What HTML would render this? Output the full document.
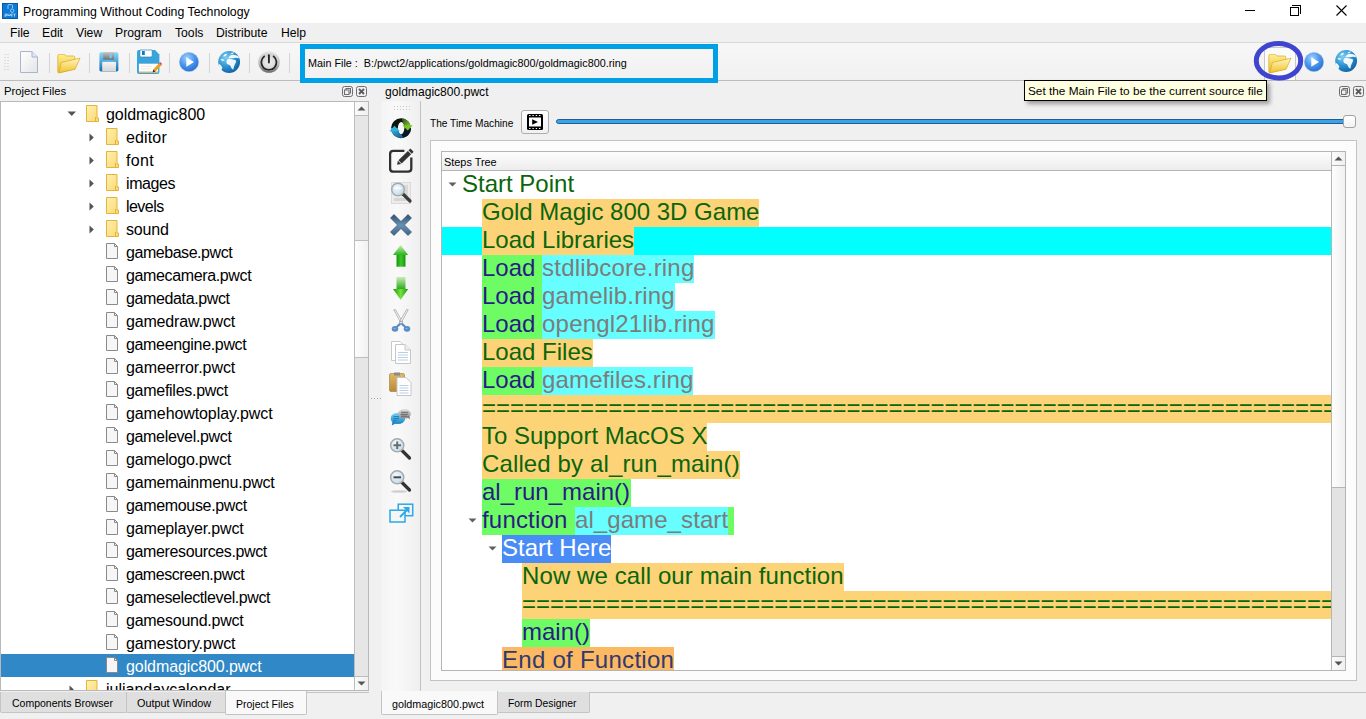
<!DOCTYPE html>
<html><head><meta charset="utf-8">
<style>
*{box-sizing:border-box;margin:0;padding:0}
html,body{width:1366px;height:719px;overflow:hidden;background:#f0f0f0;font-family:"Liberation Sans",sans-serif;color:#000}
.a{position:absolute}
.t{position:absolute;white-space:pre;line-height:20px}
#title{left:0;top:0;width:1366px;height:23px;background:#fff}
#menubar{left:0;top:23px;width:1366px;height:19px;background:#f0f0f0}
#tbline1{left:0;top:42px;width:1366px;height:1px;background:#d9d9d9}
#toolbar{left:0;top:43px;width:1366px;height:37px;background:linear-gradient(#f7f7f7,#f1f1f1)}
#tbline2{left:0;top:80px;width:1366px;height:1px;background:#bcbcbc}
.sep{position:absolute;top:53px;width:1px;height:20px;background:#d4d4d4}
/* project tree */
#ptree{left:0;top:101px;width:369px;height:590px;background:#fff;border:1px solid #b9b9b9;overflow:hidden}
.prow{position:absolute;left:1px;width:353px;height:23px}
.pt{position:absolute;font-size:16px;line-height:23px;margin-top:1px;white-space:pre;color:#000}
.sb{position:absolute;background:#e6e6e6;border-left:1px solid #bdbdbd}
/* steps */
.row{position:absolute;height:28px;white-space:pre;font-size:24px;line-height:28px}
.bx{display:inline-block;height:28px;vertical-align:top}
.bx span{position:relative;top:-1px}
.cm{background:#fdd378;color:#0b650b}
.kw{background:#6efc65;color:#2a1a84}
.pr{background:#66fefe;color:#7c7c7c}
.sp{color:#0b650b}
.sh{background:#4a8cf6;color:#fff}
.ef{background:#fdb862;color:#2f3a70}
</style></head><body>
<!-- Title bar -->
<div id="title" class="a"></div>
<svg class="a" style="left:2px;top:3px" width="16" height="16" viewBox="0 0 16 16">
<rect x="0.5" y="0.5" width="15" height="15" fill="#0b7ad6" stroke="#0a58a8" stroke-width="1"/>
<g fill="none" stroke="#cfe6fa" stroke-width="0.8" opacity="0.9">
<path d="M6 6 V2.5 Q6 1.6 7 1.6 H9.5 Q10.5 1.6 10.5 2.5 V5"/>
<circle cx="10.2" cy="7.6" r="1.7"/>
<path d="M7 9.8 V10.4"/>
<path d="M3.2 14 V11 H5.2 V12.6 H3.2 M5.8 11 L6.5 13 L7.2 11.8 L7.9 13 L8.6 11 M10.8 11 H9.3 V13 H10.8 M11.4 11 H13.5 M12.5 11 V13.6"/>
</g>
</svg>
<div class="t" style="left:23px;top:2px;font-size:12.3px;color:#000">Programming Without Coding Technology</div>
<div class="a" style="left:1245px;top:10px;width:10px;height:1px;background:#000"></div>
<div class="a" style="left:1290px;top:7px;width:9px;height:9px;border:1px solid #000;background:#fff"></div>
<div class="a" style="left:1292px;top:5px;width:9px;height:9px;border-top:1px solid #000;border-right:1px solid #000"></div>
<svg class="a" style="left:1336px;top:5px" width="11" height="11" viewBox="0 0 11 11"><path d="M0.5 0.5L10.5 10.5M10.5 0.5L0.5 10.5" stroke="#000" stroke-width="1.1"/></svg>

<!-- Menu -->
<div id="menubar" class="a"></div>
<div class="t" style="left:10px;top:23px;font-size:12.2px">File</div>
<div class="t" style="left:42px;top:23px;font-size:12.2px">Edit</div>
<div class="t" style="left:76px;top:23px;font-size:12.2px">View</div>
<div class="t" style="left:115px;top:23px;font-size:12.2px">Program</div>
<div class="t" style="left:175px;top:23px;font-size:12.2px">Tools</div>
<div class="t" style="left:216px;top:23px;font-size:12.2px">Distribute</div>
<div class="t" style="left:281px;top:23px;font-size:12.2px">Help</div>
<div id="tbline1" class="a"></div>

<!-- Toolbar -->
<div id="toolbar" class="a"></div>
<div id="tbline2" class="a"></div>

<svg width="0" height="0" style="position:absolute">
<defs>
<linearGradient id="gFold" x1="0" y1="0" x2="0" y2="1"><stop offset="0" stop-color="#fff6c0"/><stop offset="1" stop-color="#f1c22a"/></linearGradient>
<linearGradient id="gFoldB" x1="0" y1="0" x2="0" y2="1"><stop offset="0" stop-color="#fff090"/><stop offset="1" stop-color="#e8bc30"/></linearGradient>
<radialGradient id="gPlay" cx="0.4" cy="0.3" r="0.8"><stop offset="0" stop-color="#9fd0ff"/><stop offset="0.5" stop-color="#4a95ec"/><stop offset="1" stop-color="#1f64cc"/></radialGradient>
<radialGradient id="gGlobe" cx="0.35" cy="0.3" r="0.8"><stop offset="0" stop-color="#7fd0f4"/><stop offset="0.55" stop-color="#2a8fd0"/><stop offset="1" stop-color="#0b5a9a"/></radialGradient>
<radialGradient id="gPow" cx="0.5" cy="0.5" r="0.6"><stop offset="0" stop-color="#f2f2f2"/><stop offset="0.8" stop-color="#cfcfcf"/><stop offset="1" stop-color="#bdbdbd"/></radialGradient>
<linearGradient id="gPowRim" x1="0" y1="0" x2="0" y2="1"><stop offset="0" stop-color="#e8e8e8"/><stop offset="0.6" stop-color="#bcbcbc"/><stop offset="1" stop-color="#6a6a6a"/></linearGradient>
<linearGradient id="gPage" x1="0" y1="0" x2="1" y2="1"><stop offset="0" stop-color="#ffffff"/><stop offset="1" stop-color="#e4e4e8"/></linearGradient>
<linearGradient id="gShut" x1="0" y1="0" x2="0" y2="1"><stop offset="0" stop-color="#6e6e6e"/><stop offset="1" stop-color="#d8d8d8"/></linearGradient>
<linearGradient id="gArrU" x1="0" y1="0" x2="1" y2="0"><stop offset="0" stop-color="#1f9a10"/><stop offset="0.5" stop-color="#7ee860"/><stop offset="1" stop-color="#1f9a10"/></linearGradient>
<linearGradient id="gX" x1="0" y1="0" x2="0" y2="1"><stop offset="0" stop-color="#2c4e6e"/><stop offset="0.5" stop-color="#6a8fb2"/><stop offset="1" stop-color="#3d6388"/></linearGradient>
<symbol id="sFolderOpen" viewBox="0 0 24 20">
<path d="M0.8 2 Q0.8 0.3 2.6 0.3 H6.5 Q7.8 0.3 8.4 1.3 L8.9 2 H16.4 Q17.8 2 17.8 3.4 V15 L1.9 18.8 Q0.8 19 0.8 17.6 Z" fill="url(#gFoldB)" stroke="#d9a82a" stroke-width="0.7"/>
<path d="M4.4 8.4 L23 4.2 L18.1 15.2 L1.8 18.9 Z" fill="url(#gFold)" stroke="#d9a82a" stroke-width="0.7"/>
</symbol>
<symbol id="sPlay" viewBox="0 0 20 20">
<circle cx="10" cy="10" r="9.6" fill="url(#gPlay)" stroke="#8aaee0" stroke-width="0.5"/>
<path d="M7.3 5.2 L15 10 L7.3 14.8 Z" fill="#fff"/>
</symbol>
<symbol id="sGlobe" viewBox="0 0 22 22">
<circle cx="11.1" cy="11" r="10.9" fill="url(#gGlobe)"/>
<g fill="#fff" opacity="0.93">
<path d="M8.6 9.6 Q9.2 7.6 11.6 7.8 L13.6 8.2 Q16.6 8.4 18 9.4 Q18.2 11 17.2 12.8 Q16 14.6 15.2 18.8 Q13.4 18 12.8 15.8 Q12.2 14 10.9 13.8 Q8.6 13.4 8.4 11.6 Z"/>
<path d="M10.2 7.2 Q11.4 4.2 14.4 3.8 Q17.6 3.4 20.6 5.4 L20.8 7.4 Q18.6 6.6 16.2 7 Q13 7.4 10.2 7.2 Z"/>
<path d="M12.2 3.2 Q13.8 1 16.2 1.6 Q15 3.8 12.2 3.2 Z"/>
<path d="M5.4 5.6 Q5.8 2.9 8.8 2.8 Q8.6 5.4 5.4 5.6 Z"/>
<path d="M2.4 8.6 Q4.2 7.2 6.4 9.2 Q4.6 10.6 2.4 8.6 Z"/>
<path d="M0.4 12.4 Q2.8 13.2 4.4 16.4 Q4 18.4 3 19 Q0.6 16.2 0.4 12.4 Z"/>
</g>
</symbol>
<symbol id="sPower" viewBox="0 0 22 22">
<circle cx="11" cy="11" r="10.8" fill="url(#gPowRim)"/>
<circle cx="11" cy="11" r="9" fill="url(#gPow)"/>
<path d="M6.2 5.4 A7.6 7.6 0 1 0 15.6 5.4" fill="none" stroke="#262626" stroke-width="1.8" stroke-linecap="round"/>
<path d="M10.9 4.3 V11.6" stroke="#262626" stroke-width="1.9" stroke-linecap="round"/>
</symbol>
</defs></svg>
<!-- grip -->
<svg class="a" style="left:4px;top:53px" width="6" height="18" viewBox="0 0 6 18">
<g fill="#c4c4c4"><rect x="0.5" y="1" width="1" height="1"/><rect x="3.5" y="1" width="1" height="1"/><rect x="0.5" y="4" width="1" height="1"/><rect x="3.5" y="4" width="1" height="1"/><rect x="0.5" y="7" width="1" height="1"/><rect x="3.5" y="7" width="1" height="1"/><rect x="0.5" y="10" width="1" height="1"/><rect x="3.5" y="10" width="1" height="1"/><rect x="0.5" y="13" width="1" height="1"/><rect x="3.5" y="13" width="1" height="1"/><rect x="0.5" y="16" width="1" height="1"/><rect x="3.5" y="16" width="1" height="1"/></g></svg>
<!-- new file -->
<svg class="a" style="left:19px;top:50px" width="20" height="24" viewBox="0 0 20 24">
<path d="M1.5 1.5 H13 L18.5 7 V22.5 H1.5 Z" fill="url(#gPage)" stroke="#aab4cc" stroke-width="1"/>
<path d="M13 1.5 V7 H18.5" fill="#dfe6f5" stroke="#aab4cc" stroke-width="1"/>
</svg>
<div class="sep" style="left:49px"></div>
<svg class="a" style="left:57px;top:54px" width="24" height="20"><use href="#sFolderOpen"/></svg>
<div class="sep" style="left:89px"></div>
<!-- save -->
<svg class="a" style="left:98px;top:51px" width="21" height="21" viewBox="0 0 21 21">
<defs><linearGradient id="gSb" x1="0" y1="0" x2="0" y2="1"><stop offset="0" stop-color="#8adaf8"/><stop offset="1" stop-color="#0f6cb4"/></linearGradient>
<linearGradient id="gSs" x1="0" y1="0" x2="0" y2="1"><stop offset="0" stop-color="#c6c6c6"/><stop offset="1" stop-color="#6e6e6e"/></linearGradient>
<linearGradient id="gSl" x1="0" y1="0" x2="0" y2="1"><stop offset="0" stop-color="#f4f4f4"/><stop offset="1" stop-color="#d4d4d4"/></linearGradient></defs>
<rect x="1.4" y="1.2" width="19" height="19.2" rx="1.6" fill="url(#gSb)"/>
<rect x="5.2" y="1.2" width="10.8" height="7.6" fill="url(#gSs)"/>
<rect x="11.6" y="3" width="2" height="4.2" fill="#7ad0f4"/>
<rect x="5.2" y="8.8" width="10.8" height="2.1" fill="#52b4e8"/>
<rect x="4.2" y="10.9" width="13.8" height="9.5" fill="url(#gSl)"/>
</svg>
<div class="sep" style="left:129px"></div>
<!-- save as -->
<svg class="a" style="left:136px;top:49px" width="26" height="26" viewBox="0 0 26 26">
<path d="M1 3 Q1 1 3 1 H19 L23.4 5.5 V23 Q23.4 25 21.4 25 H3 Q1 25 1 23 Z" fill="#3aa3da"/>
<path d="M3.9 1 H16.2 V6.5 Q16.2 8 14.7 8 H5.4 Q3.9 8 3.9 6.5 Z" fill="#fff" stroke="#2588c4" stroke-width="0.7"/>
<rect x="6" y="2" width="2.8" height="4" fill="#1a78b8"/>
<rect x="2.9" y="14.7" width="19.2" height="9" fill="#fff"/>
<path d="M4.5 17.3 H16 M4.5 19.8 H15" stroke="#e2e2e2" stroke-width="0.8"/>
<rect x="2.9" y="22.6" width="19.2" height="1.1" fill="#d9a040"/>
<path d="M17.2 20.5 L23 14.3 L25.3 16.4 L19.5 22.6 Z" fill="#f0a020"/>
<path d="M23 14.3 L24.2 13 L26 14.7 L25.3 16.4 Z" fill="#e64848"/>
<path d="M17.2 20.5 L19.5 22.6 L16.8 23.2 Z" fill="#222"/>
</svg>
<div class="sep" style="left:169px"></div>
<svg class="a" style="left:179px;top:52px" width="20" height="20"><use href="#sPlay"/></svg>
<div class="sep" style="left:209px"></div>
<svg class="a" style="left:218px;top:51px" width="22" height="22"><use href="#sGlobe"/></svg>
<div class="sep" style="left:249px"></div>
<svg class="a" style="left:258px;top:51px" width="22" height="22"><use href="#sPower"/></svg>
<div class="sep" style="left:289px"></div>
<!-- main file frame -->
<div class="a" style="left:300px;top:44px;width:418px;height:39px;border:5px solid #00a0e6;background:transparent"></div>
<div class="t" style="left:308px;top:53px;font-size:10.8px;color:#000">Main File :  B:/pwct2/applications/goldmagic800/goldmagic800.ring</div>
<!-- right toolbar -->
<div class="a" style="left:1264px;top:47px;width:32px;height:33px;border:1px solid #c8c8c8;border-bottom:none;background:#fbfbfb"></div>
<svg class="a" style="left:1268px;top:54px" width="24" height="20"><use href="#sFolderOpen"/></svg>
<svg class="a" style="left:1250px;top:38px" width="58" height="46" viewBox="0 0 58 46"><ellipse cx="28.5" cy="22.7" rx="22.2" ry="17.3" fill="none" stroke="#3f45cf" stroke-width="5"/></svg>
<svg class="a" style="left:1304px;top:52px" width="20" height="20"><use href="#sPlay"/></svg>
<svg class="a" style="left:1335px;top:50px" width="22" height="22"><use href="#sGlobe"/></svg>

<svg width="0" height="0" style="position:absolute"><defs>
<linearGradient id="gFc" x1="0" y1="0" x2="1" y2="1"><stop offset="0" stop-color="#fff0b0"/><stop offset="1" stop-color="#fbd870"/></linearGradient>
<symbol id="sFolder" viewBox="0 0 14 17">
<path d="M1.5 0.5 H12 V13 H13.5 V16.5 H1.5 Z" fill="url(#gFc)" stroke="#e2b43a" stroke-width="1"/>
<path d="M10.5 12 V16.5" stroke="#e2b43a" stroke-width="1"/>
</symbol>
<symbol id="sFile" viewBox="0 0 14 17">
<path d="M1.5 1.5 H9.5 L12.5 4.5 V16.5 H1.5 Z" fill="#f6f6f6" stroke="#8a8a8a" stroke-width="1"/>
<path d="M9.5 1.5 V4.5 H12.5" fill="none" stroke="#8a8a8a" stroke-width="1"/>
</symbol>
</defs></svg>
<div class="t" style="left:4px;top:81px;font-size:11.3px;color:#000">Project Files</div>
<svg class="a" style="left:342px;top:86px" width="11" height="11" viewBox="0 0 11 11"><rect x="0.5" y="0.5" width="10" height="10" rx="2" fill="none" stroke="#6e6e6e"/><rect x="4" y="2.5" width="4.5" height="4.5" fill="none" stroke="#6e6e6e"/><rect x="2.5" y="4" width="4.5" height="4.5" fill="#f0f0f0" stroke="#6e6e6e"/></svg>
<svg class="a" style="left:356px;top:86px" width="11" height="11" viewBox="0 0 11 11"><rect x="0.5" y="0.5" width="10" height="10" rx="2" fill="none" stroke="#6e6e6e"/><path d="M3 3 L8 8 M8 3 L3 8" stroke="#5a5a5a" stroke-width="1.8"/></svg>
<div id="ptree" class="a">

<div class="a" style="left:0;top:552px;width:353px;height:23px;background:#3088c6"></div>
<svg class="a" style="left:66px;top:9px" width="10" height="6"><path d="M0.5 0.5 H9 L4.75 5 Z" fill="#555"/></svg>
<svg class="a" style="left:84px;top:3px" width="14" height="17"><use href="#sFolder"/></svg>
<div class="pt" style="left:105px;top:0px;letter-spacing:-0.045px;">goldmagic800</div>
<svg class="a" style="left:88px;top:31px" width="6" height="9"><path d="M0.5 0.5 L4.8 4.5 L0.5 8.5 Z" fill="#555"/></svg>
<svg class="a" style="left:104px;top:26px" width="14" height="17"><use href="#sFolder"/></svg>
<div class="pt" style="left:125px;top:23px;letter-spacing:0.140px;">editor</div>
<svg class="a" style="left:88px;top:54px" width="6" height="9"><path d="M0.5 0.5 L4.8 4.5 L0.5 8.5 Z" fill="#555"/></svg>
<svg class="a" style="left:104px;top:49px" width="14" height="17"><use href="#sFolder"/></svg>
<div class="pt" style="left:125px;top:46px;letter-spacing:0.300px;">font</div>
<svg class="a" style="left:88px;top:77px" width="6" height="9"><path d="M0.5 0.5 L4.8 4.5 L0.5 8.5 Z" fill="#555"/></svg>
<svg class="a" style="left:104px;top:72px" width="14" height="17"><use href="#sFolder"/></svg>
<div class="pt" style="left:125px;top:69px;letter-spacing:-0.400px;">images</div>
<svg class="a" style="left:88px;top:100px" width="6" height="9"><path d="M0.5 0.5 L4.8 4.5 L0.5 8.5 Z" fill="#555"/></svg>
<svg class="a" style="left:104px;top:95px" width="14" height="17"><use href="#sFolder"/></svg>
<div class="pt" style="left:125px;top:92px;letter-spacing:-0.540px;">levels</div>
<svg class="a" style="left:88px;top:123px" width="6" height="9"><path d="M0.5 0.5 L4.8 4.5 L0.5 8.5 Z" fill="#555"/></svg>
<svg class="a" style="left:104px;top:118px" width="14" height="17"><use href="#sFolder"/></svg>
<div class="pt" style="left:125px;top:115px;letter-spacing:-0.175px;">sound</div>
<svg class="a" style="left:104px;top:140px" width="14" height="17"><use href="#sFile"/></svg>
<div class="pt" style="left:125px;top:138px;letter-spacing:-0.450px;">gamebase.pwct</div>
<svg class="a" style="left:104px;top:163px" width="14" height="17"><use href="#sFile"/></svg>
<div class="pt" style="left:125px;top:161px;letter-spacing:-0.364px;">gamecamera.pwct</div>
<svg class="a" style="left:104px;top:186px" width="14" height="17"><use href="#sFile"/></svg>
<div class="pt" style="left:125px;top:184px;letter-spacing:-0.375px;">gamedata.pwct</div>
<svg class="a" style="left:104px;top:209px" width="14" height="17"><use href="#sFile"/></svg>
<div class="pt" style="left:125px;top:207px;letter-spacing:-0.167px;">gamedraw.pwct</div>
<svg class="a" style="left:104px;top:232px" width="14" height="17"><use href="#sFile"/></svg>
<div class="pt" style="left:125px;top:230px;letter-spacing:-0.336px;">gameengine.pwct</div>
<svg class="a" style="left:104px;top:255px" width="14" height="17"><use href="#sFile"/></svg>
<div class="pt" style="left:125px;top:253px;letter-spacing:-0.077px;">gameerror.pwct</div>
<svg class="a" style="left:104px;top:278px" width="14" height="17"><use href="#sFile"/></svg>
<div class="pt" style="left:125px;top:276px;letter-spacing:-0.277px;">gamefiles.pwct</div>
<svg class="a" style="left:104px;top:301px" width="14" height="17"><use href="#sFile"/></svg>
<div class="pt" style="left:125px;top:299px;letter-spacing:-0.094px;">gamehowtoplay.pwct</div>
<svg class="a" style="left:104px;top:324px" width="14" height="17"><use href="#sFile"/></svg>
<div class="pt" style="left:125px;top:322px;letter-spacing:-0.338px;">gamelevel.pwct</div>
<svg class="a" style="left:104px;top:347px" width="14" height="17"><use href="#sFile"/></svg>
<div class="pt" style="left:125px;top:345px;letter-spacing:-0.208px;">gamelogo.pwct</div>
<svg class="a" style="left:104px;top:370px" width="14" height="17"><use href="#sFile"/></svg>
<div class="pt" style="left:125px;top:368px;letter-spacing:-0.206px;">gamemainmenu.pwct</div>
<svg class="a" style="left:104px;top:393px" width="14" height="17"><use href="#sFile"/></svg>
<div class="pt" style="left:125px;top:391px;letter-spacing:-0.323px;">gamemouse.pwct</div>
<svg class="a" style="left:104px;top:416px" width="14" height="17"><use href="#sFile"/></svg>
<div class="pt" style="left:125px;top:414px;letter-spacing:-0.164px;">gameplayer.pwct</div>
<svg class="a" style="left:104px;top:439px" width="14" height="17"><use href="#sFile"/></svg>
<div class="pt" style="left:125px;top:437px;letter-spacing:-0.371px;">gameresources.pwct</div>
<svg class="a" style="left:104px;top:462px" width="14" height="17"><use href="#sFile"/></svg>
<div class="pt" style="left:125px;top:460px;letter-spacing:-0.471px;">gamescreen.pwct</div>
<svg class="a" style="left:104px;top:485px" width="14" height="17"><use href="#sFile"/></svg>
<div class="pt" style="left:125px;top:483px;letter-spacing:-0.395px;">gameselectlevel.pwct</div>
<svg class="a" style="left:104px;top:508px" width="14" height="17"><use href="#sFile"/></svg>
<div class="pt" style="left:125px;top:506px;letter-spacing:-0.254px;">gamesound.pwct</div>
<svg class="a" style="left:104px;top:531px" width="14" height="17"><use href="#sFile"/></svg>
<div class="pt" style="left:125px;top:529px;letter-spacing:-0.100px;">gamestory.pwct</div>
<svg class="a" style="left:104px;top:554px" width="14" height="17"><use href="#sFile"/></svg>
<div class="pt" style="left:125px;top:552px;color:#fff;letter-spacing:-0.081px;">goldmagic800.pwct</div>
<svg class="a" style="left:68px;top:583px" width="6" height="9"><path d="M0.5 0.5 L4.8 4.5 L0.5 8.5 Z" fill="#555"/></svg>
<svg class="a" style="left:84px;top:578px" width="14" height="17"><use href="#sFolder"/></svg>
<div class="pt" style="left:105px;top:575px">juliandaycalendar</div>

<div class="sb" style="left:353px;top:0;width:14px;height:588px"></div>
<div class="a" style="left:354px;top:0;width:13px;height:14px;background:linear-gradient(90deg,#fbfbfb,#f0f0f0);border-bottom:1px solid #bdbdbd"></div>
<svg class="a" style="left:356px;top:4px" width="9" height="5"><path d="M0.5 4.5 L4.5 0.5 L8.5 4.5 Z" fill="#555"/></svg>
<div class="a" style="left:354px;top:138px;width:13px;height:118px;background:linear-gradient(90deg,#fdfdfd,#f1f1f1);border-top:1px solid #bdbdbd;border-bottom:1px solid #bdbdbd"></div>
<div class="a" style="left:354px;top:574px;width:13px;height:14px;background:linear-gradient(90deg,#fbfbfb,#f0f0f0);border-top:1px solid #bdbdbd"></div>
<svg class="a" style="left:356px;top:579px" width="9" height="5"><path d="M0.5 0.5 L4.5 4.5 L8.5 0.5 Z" fill="#555"/></svg>
</div>
<!-- left bottom tabs -->
<div class="a" style="left:0;top:692px;width:369px;height:1px;background:#c4c4c4"></div>
<div class="a" style="left:0;top:692px;width:127px;height:21px;background:#dfdfdf;border:1px solid #c4c4c4;border-top:none;border-radius:0 0 2px 2px"></div>
<div class="t" style="left:12px;top:693px;font-size:10.5px">Components Browser</div>
<div class="a" style="left:126px;top:692px;width:100px;height:21px;background:#dfdfdf;border:1px solid #c4c4c4;border-top:none;border-radius:0 0 2px 2px"></div>
<div class="t" style="left:137px;top:693px;font-size:10.85px">Output Window</div>
<div class="a" style="left:225px;top:691px;width:82px;height:24px;background:#f9f9f9;border:1px solid #c4c4c4;border-top:none;border-radius:0 0 2px 2px"></div>
<div class="t" style="left:236px;top:694px;font-size:10.5px">Project Files</div>


<!-- editor dock -->
<div class="t" style="left:385px;top:82px;font-size:12.1px">goldmagic800.pwct</div>
<svg class="a" style="left:1339px;top:86px" width="11" height="11" viewBox="0 0 11 11"><rect x="0.5" y="0.5" width="10" height="10" rx="2" fill="none" stroke="#6e6e6e"/><rect x="4" y="2.5" width="4.5" height="4.5" fill="none" stroke="#6e6e6e"/><rect x="2.5" y="4" width="4.5" height="4.5" fill="#f0f0f0" stroke="#6e6e6e"/></svg>
<svg class="a" style="left:1353px;top:86px" width="11" height="11" viewBox="0 0 11 11"><rect x="0.5" y="0.5" width="10" height="10" rx="2" fill="none" stroke="#6e6e6e"/><path d="M3 3 L8 8 M8 3 L3 8" stroke="#5a5a5a" stroke-width="1.8"/></svg>
<div class="a" style="left:381px;top:101px;width:39px;height:591px;background:linear-gradient(90deg,#f4f4f4,#f9f9f9 40%,#efefef)"></div>
<div class="a" style="left:420px;top:101px;width:1px;height:591px;background:#c2c2c2"></div>
<svg class="a" style="left:393px;top:105px" width="18" height="6"><g fill="#c8c8c8"><rect x="1" y="1" width="1" height="1"/><rect x="4" y="1" width="1" height="1"/><rect x="7" y="1" width="1" height="1"/><rect x="10" y="1" width="1" height="1"/><rect x="13" y="1" width="1" height="1"/><rect x="16" y="1" width="1" height="1"/><rect x="1" y="4" width="1" height="1"/><rect x="4" y="4" width="1" height="1"/><rect x="7" y="4" width="1" height="1"/><rect x="10" y="4" width="1" height="1"/><rect x="13" y="4" width="1" height="1"/><rect x="16" y="4" width="1" height="1"/></g></svg>
<!-- splitter grip -->
<svg class="a" style="left:370px;top:397px" width="13" height="3"><g fill="#a0a0a0"><rect x="1" y="1" width="1" height="1"/><rect x="4" y="1" width="1" height="1"/><rect x="7" y="1" width="1" height="1"/><rect x="10" y="1" width="1" height="1"/></g></svg>
<!-- time machine -->
<div class="t" style="left:430px;top:114px;font-size:10.15px">The Time Machine</div>
<div class="a" style="left:521px;top:110px;width:28px;height:24px;border:1px solid #adadad;border-radius:3px;background:linear-gradient(#ffffff,#f1f1f1)"></div>
<svg class="a" style="left:527px;top:114px" width="16" height="16" viewBox="0 0 16 16">
<rect x="0" y="0" width="16" height="16" rx="1.5" fill="#000"/>
<rect x="2" y="3.5" width="12" height="9" fill="#fff"/>
<g fill="#fff"><rect x="2" y="1" width="1.6" height="1" rx="0.5"/><rect x="5.3" y="1" width="1.6" height="1" rx="0.5"/><rect x="8.6" y="1" width="1.6" height="1" rx="0.5"/><rect x="11.9" y="1" width="1.6" height="1" rx="0.5"/>
<rect x="2" y="14" width="1.6" height="1" rx="0.5"/><rect x="5.3" y="14" width="1.6" height="1" rx="0.5"/><rect x="8.6" y="14" width="1.6" height="1" rx="0.5"/><rect x="11.9" y="14" width="1.6" height="1" rx="0.5"/></g>
<path d="M5.2 5.2 L11 8 L5.2 10.8 Z" fill="#000"/>
</svg>
<div class="a" style="left:556px;top:119px;width:790px;height:5px;border:1px solid #1d5f92;border-radius:2.5px;background:#3da2e8"></div>
<div class="a" style="left:1343px;top:115px;width:13px;height:13px;border:1px solid #a2a2a2;border-radius:3px;background:linear-gradient(#ffffff,#f2f2f2)"></div>
<!-- outer frame -->
<div class="a" style="left:430px;top:140px;width:927px;height:541px;border:1px solid #c3c3c3;background:#fcfcfc"></div>
<!-- steps tree -->
<div id="stree" class="a" style="left:441px;top:151px;width:905px;height:520px;border:1px solid #b5b5b5;background:#fff;overflow:hidden">
<div class="a" style="left:0;top:0;width:889px;height:19px;background:linear-gradient(#fdfdfd,#ececec);border-bottom:1px solid #b5b5b5"></div>
<div class="t" style="left:2px;top:1px;font-size:10.9px;line-height:19px">Steps Tree</div>
<div id="rows" class="a" style="left:0;top:19px;width:889px;height:499px;overflow:hidden">
<svg class="a" style="left:6px;top:11px" width="10" height="6"><path d="M0.5 0.5 H8.5 L4.5 4.5 Z" fill="#606060"/></svg>
<div class="row" style="left:20px;top:0px"><span class="bx sp"><span>Start Point</span></span></div>
<div class="row" style="left:40px;top:28px"><span class="bx cm"><span>Gold Magic 800 3D Game</span></span></div>
<div class="a" style="left:0;top:56px;width:889px;height:28px;background:#00ffff"></div>
<div class="row" style="left:40px;top:56px"><span class="bx cm"><span>Load Libraries</span></span></div>
<div class="row" style="left:40px;top:84px"><span class="bx kw"><span>Load </span></span><span class="bx pr" style="width:152px;letter-spacing:0.2px"><span>stdlibcore.ring</span></span></div>
<div class="row" style="left:40px;top:112px"><span class="bx kw"><span>Load </span></span><span class="bx pr" style="width:133px;letter-spacing:0.17px"><span>gamelib.ring</span></span></div>
<div class="row" style="left:40px;top:140px"><span class="bx kw"><span>Load </span></span><span class="bx pr" style="width:173px;letter-spacing:0.19px"><span>opengl21lib.ring</span></span></div>
<div class="row" style="left:40px;top:168px"><span class="bx cm"><span>Load Files</span></span></div>
<div class="row" style="left:40px;top:196px"><span class="bx kw"><span>Load </span></span><span class="bx pr" style="width:151px;letter-spacing:0.14px"><span>gamefiles.ring</span></span></div>
<div class="row" style="left:40px;top:224px"><span class="bx cm"><span>================================================================================</span></span></div>
<div class="row" style="left:40px;top:252px"><span class="bx cm"><span>To Support MacOS X</span></span></div>
<div class="row" style="left:40px;top:280px"><span class="bx cm" style="width:258px;letter-spacing:0.13px"><span>Called by al_run_main()</span></span></div>
<div class="row" style="left:40px;top:308px"><span class="bx kw" style="width:149px"><span>al_run_main()</span></span></div>
<svg class="a" style="left:26px;top:347px" width="10" height="6"><path d="M0.5 0.5 H8.5 L4.5 4.5 Z" fill="#606060"/></svg>
<div class="row" style="left:40px;top:336px"><span class="bx kw" style="width:93px;letter-spacing:0.18px"><span>function </span></span><span class="bx pr" style="width:153px;letter-spacing:0.08px"><span>al_game_start</span></span><span class="bx kw" style="width:6px"><span> </span></span></div>
<svg class="a" style="left:46px;top:375px" width="10" height="6"><path d="M0.5 0.5 H8.5 L4.5 4.5 Z" fill="#606060"/></svg>
<div class="row" style="left:60px;top:364px"><span class="bx sh"><span>Start Here</span></span></div>
<div class="row" style="left:80px;top:392px"><span class="bx cm" style="width:322px;letter-spacing:0.1px"><span>Now we call our main function</span></span></div>
<div class="row" style="left:80px;top:420px"><span class="bx cm"><span>================================================================================</span></span></div>
<div class="row" style="left:80px;top:448px"><span class="bx kw"><span>main()</span></span></div>
<div class="row" style="left:60px;top:476px"><span class="bx ef" style="width:172px;letter-spacing:0.27px"><span>End of Function</span></span></div>
</div>
<div class="a" style="left:889px;top:0;width:14px;height:518px;background:#e3e3e3;border-left:1px solid #b5b5b5"></div>
<div class="a" style="left:890px;top:0;width:13px;height:14px;background:linear-gradient(90deg,#fbfbfb,#f0f0f0);border-bottom:1px solid #b5b5b5"></div>
<svg class="a" style="left:892px;top:4px" width="9" height="5"><path d="M0.5 4.5 L4.5 0.5 L8.5 4.5 Z" fill="#555"/></svg>
<div class="a" style="left:890px;top:14px;width:13px;height:322px;background:linear-gradient(90deg,#fdfdfd,#f1f1f1);border-bottom:1px solid #b5b5b5"></div>
<div class="a" style="left:890px;top:504px;width:13px;height:14px;background:linear-gradient(90deg,#fbfbfb,#f0f0f0);border-top:1px solid #b5b5b5"></div>
<svg class="a" style="left:892px;top:509px" width="9" height="5"><path d="M0.5 0.5 L4.5 4.5 L8.5 0.5 Z" fill="#555"/></svg>
</div>
<!-- editor bottom tabs -->
<div class="a" style="left:381px;top:692px;width:985px;height:1px;background:#c4c4c4"></div>
<div class="a" style="left:497px;top:692px;width:93px;height:21px;background:#dfdfdf;border:1px solid #c4c4c4;border-top:none;border-radius:0 0 2px 2px"></div>
<div class="t" style="left:508px;top:694px;font-size:10.35px">Form Designer</div>
<div class="a" style="left:381px;top:691px;width:117px;height:24px;background:#f9f9f9;border:1px solid #c4c4c4;border-top:none;border-radius:0 0 2px 2px"></div>
<div class="t" style="left:392px;top:694px;font-size:10.75px">goldmagic800.pwct</div>


<!-- vertical toolbar icons -->
<svg width="0" height="0" style="position:absolute"><defs>
<linearGradient id="gRefG" x1="0" y1="0" x2="1" y2="1"><stop offset="0" stop-color="#0d1a10"/><stop offset="0.6" stop-color="#3c8a1a"/><stop offset="1" stop-color="#8fd630"/></linearGradient>
<linearGradient id="gRefB" x1="0" y1="1" x2="1" y2="0"><stop offset="0" stop-color="#2ab0e8"/><stop offset="0.5" stop-color="#0f5a8a"/><stop offset="1" stop-color="#0a1820"/></linearGradient>
<radialGradient id="gLens" cx="0.4" cy="0.35" r="0.7"><stop offset="0" stop-color="#f4fbff"/><stop offset="1" stop-color="#b8d8e8"/></radialGradient>
<linearGradient id="gClip" x1="0" y1="0" x2="0" y2="1"><stop offset="0" stop-color="#e0b868"/><stop offset="1" stop-color="#b88a38"/></linearGradient>
</defs></svg>
<!-- refresh -->
<svg class="a" style="left:389px;top:117px" width="24" height="23" viewBox="0 0 24 23">
<defs>
<clipPath id="cRing"><path clip-rule="evenodd" d="M2 11.3 A10 10 0 1 0 22 11.3 A10 10 0 1 0 2 11.3 Z M8.9 11.1 A3.3 6.2 0 1 0 15.5 11.1 A3.3 6.2 0 1 0 8.9 11.1 Z"/></clipPath>
<linearGradient id="gRg" x1="0" y1="0" x2="1" y2="0.6"><stop offset="0" stop-color="#1c3a12"/><stop offset="1" stop-color="#8fd232"/></linearGradient>
<linearGradient id="gRb" x1="0" y1="0" x2="1" y2="1"><stop offset="0" stop-color="#3cc4ec"/><stop offset="1" stop-color="#0a4a7a"/></linearGradient>
</defs>
<g clip-path="url(#cRing)">
<rect x="0" y="0" width="24" height="23" fill="#0c140e"/>
<path d="M12 0 H24 V11 H16 Z" fill="url(#gRg)"/>
<path d="M13 11.5 H24 V23 H14 Z" fill="#0d1626"/>
<path d="M0 11 H9 L15.5 23 H0 Z" fill="url(#gRb)"/>
</g>
<path d="M13.3 8.3 H23.7 L18.7 13.6 Z" fill="#7cc426"/>
<path d="M0.4 14.3 L5.5 8.8 L10.8 14.3 Z" fill="#2fb0e0"/>
</svg>
<!-- edit -->
<svg class="a" style="left:389px;top:148px" width="25" height="25" viewBox="0 0 25 25">
<path d="M15.4 2.8 H4.3 Q1.1 2.8 1.1 6 V20.5 Q1.1 23.7 4.3 23.7 H19.1 Q22.3 23.7 22.3 20.5 V9.4" fill="none" stroke="#303030" stroke-width="2.3"/>
<path d="M8 16.8 L12.1 16 L8.9 12.7 Z" fill="#333"/>
<path d="M12.7 15.45 L9.47 12.15 L18.9 2.93 L22.1 6.23 Z" fill="#333"/>
<path d="M22.7 5.65 L19.5 2.35 L21.4 0.5 L24.6 3.8 Z" fill="#333"/>
</svg>
<!-- search (disabled) -->
<svg class="a" style="left:390px;top:181px" width="23" height="24" viewBox="0 0 23 24">
<rect x="1.5" y="1.5" width="19" height="21" fill="#ececec" stroke="#dadada"/>
<rect x="11" y="4" width="7" height="11" fill="#d8d8d8"/>
<rect x="4" y="17" width="13" height="3" fill="#d5d5d5"/>
<path d="M13 13 L20 20" stroke="#3c3c3c" stroke-width="3.2" stroke-linecap="round"/>
<circle cx="8" cy="8.5" r="6.3" fill="url(#gLens)" stroke="#a8a8a8" stroke-width="1.4"/>
<path d="M4.5 8 Q7 6 11.5 7.5" stroke="#fff" stroke-width="1.2" fill="none"/>
</svg>
<!-- X -->
<svg class="a" style="left:389px;top:213px" width="24" height="24" viewBox="0 0 24 24">
<path d="M1.5 5 L5 1.5 L12 8.5 L19 1.5 L22.5 5 L15.5 12 L22.5 19 L19 22.5 L12 15.5 L5 22.5 L1.5 19 L8.5 12 Z" fill="url(#gX)" stroke="#2a4866" stroke-width="0.6"/>
</svg>
<!-- up arrow -->
<svg class="a" style="left:393px;top:244px" width="16" height="24" viewBox="0 0 16 24">
<defs>
<linearGradient id="gUh" x1="0" y1="0" x2="0" y2="1"><stop offset="0" stop-color="#c4f2ae"/><stop offset="1" stop-color="#2cb41c"/></linearGradient>
<linearGradient id="gUs" x1="0" y1="0" x2="1" y2="0"><stop offset="0" stop-color="#17940e"/><stop offset="0.5" stop-color="#3cc82a"/><stop offset="1" stop-color="#17940e"/></linearGradient>
<linearGradient id="gDs" x1="0" y1="0" x2="0" y2="1"><stop offset="0" stop-color="#c8ecb8"/><stop offset="1" stop-color="#28a818"/></linearGradient>
<linearGradient id="gDh" x1="0" y1="0" x2="1" y2="0"><stop offset="0" stop-color="#1a980e"/><stop offset="0.5" stop-color="#72e23c"/><stop offset="1" stop-color="#1a980e"/></linearGradient>
</defs>
<path d="M3.5 10 H12.5 V22.7 H3.5 Z" fill="url(#gUs)"/>
<path d="M0 11 L7.6 1 L15.2 11 Z" fill="url(#gUh)"/>
</svg>
<!-- down arrow -->
<svg class="a" style="left:393px;top:276px" width="16" height="24" viewBox="0 0 16 24">
<path d="M3.5 1 H12.5 V13.5 H3.5 Z" fill="url(#gDs)"/>
<path d="M0 13 H15.2 L7.6 23.7 Z" fill="url(#gDh)"/>
</svg>
<!-- scissors -->
<svg class="a" style="left:390px;top:308px" width="22" height="25" viewBox="0 0 22 25">
<path d="M3.8 1.8 L5.4 1.6 L12.3 13.6 L10.7 14.6 Z" fill="#f6f6f6" stroke="#8e8e8e" stroke-width="0.6"/>
<path d="M18.2 1.8 L16.6 1.6 L9.7 13.6 L11.3 14.6 Z" fill="#f6f6f6" stroke="#8e8e8e" stroke-width="0.6"/>
<circle cx="11" cy="14.6" r="1.4" fill="#eee" stroke="#888" stroke-width="0.7"/>
<path d="M9.8 16.2 L6.6 19" stroke="#5a8fc6" stroke-width="2.2" stroke-linecap="round"/>
<path d="M12.2 16.2 L15.4 19" stroke="#5a8fc6" stroke-width="2.2" stroke-linecap="round"/>
<ellipse cx="5" cy="20.8" rx="3.3" ry="2.9" fill="#5a8fc6"/>
<ellipse cx="17" cy="20.8" rx="3.3" ry="2.9" fill="#5a8fc6"/>
<path d="M3.5 20.5 H5.5 M15.5 20.5 H17.5" stroke="#9cc0e6" stroke-width="0.8"/>
</svg>
<!-- copy -->
<svg class="a" style="left:390px;top:340px" width="22" height="25" viewBox="0 0 22 25">
<path d="M1.5 1.5 H10 L14 5.5 V20.5 H1.5 Z" fill="#fff" stroke="#cacaca"/>
<path d="M5.5 4.5 H15 L20.5 10 V23.5 H5.5 Z" fill="#fff" stroke="#c6c6c6"/>
<path d="M15 4.5 V10 H20.5" fill="#eee" stroke="#c6c6c6"/>
<path d="M8 12.5 H18 M8 15 H18 M8 17.5 H18 M8 20 H18" stroke="#b0c8e0" stroke-width="0.9"/>
</svg>
<!-- paste -->
<svg class="a" style="left:389px;top:372px" width="23" height="25" viewBox="0 0 23 25">
<rect x="0.5" y="1.5" width="15" height="18" rx="1.5" fill="url(#gClip)" stroke="#a07a30" stroke-width="0.6"/>
<rect x="5" y="0.5" width="6" height="3" fill="#8a8a8a"/>
<path d="M8 5.5 H17 L22 10.5 V23.5 H8 Z" fill="#fff" stroke="#c6c6c6"/>
<path d="M10.5 13.5 H19.5 M10.5 16 H19.5 M10.5 18.5 H19.5 M10.5 21 H19.5" stroke="#b0c8e0" stroke-width="0.9"/>
</svg>
<!-- chat -->
<svg class="a" style="left:390px;top:407px" width="22" height="19" viewBox="0 0 22 19">
<defs>
<linearGradient id="gCb" x1="0" y1="0" x2="0" y2="1"><stop offset="0" stop-color="#7ad4f8"/><stop offset="1" stop-color="#1a86c6"/></linearGradient>
<linearGradient id="gCg" x1="0" y1="0" x2="0" y2="1"><stop offset="0" stop-color="#e2e2e2"/><stop offset="1" stop-color="#8e8e8e"/></linearGradient>
</defs>
<ellipse cx="7.9" cy="11.4" rx="7.2" ry="5.7" fill="url(#gCb)"/>
<path d="M2.5 14.5 L1.8 18.6 L6.5 16 Z" fill="#1a86c6"/>
<path d="M3.5 9.6 H9 M3.5 11.6 H9 M3.5 13.6 H6.5" stroke="#1570a8" stroke-width="1" opacity="0.8"/>
<ellipse cx="14.5" cy="6.8" rx="6.5" ry="4.8" fill="url(#gCg)"/>
<path d="M16.5 10 L20.3 12.2 L18.8 8.5 Z" fill="#777"/>
<path d="M11 5.3 H18.3 M10.6 7.3 H18.3 M11 9.2 H17" stroke="#5a5a5a" stroke-width="0.9"/>
</svg>
<!-- zoom in -->
<svg class="a" style="left:389px;top:437px" width="23" height="24" viewBox="0 0 23 24">
<path d="M12.5 13 L20.5 21" stroke="#333" stroke-width="3.2" stroke-linecap="round"/>
<circle cx="8.2" cy="8.3" r="6.6" fill="url(#gLens)" stroke="#a8a8a8" stroke-width="1.4"/>
<path d="M4.5 8.3 H12 M8.2 4.6 V12" stroke="#6a6a6a" stroke-width="2"/>
</svg>
<!-- zoom out -->
<svg class="a" style="left:389px;top:469px" width="23" height="25" viewBox="0 0 23 25">
<ellipse cx="10" cy="22.5" rx="8" ry="1.3" fill="#cfcfcf"/>
<path d="M12.5 13 L20.5 21" stroke="#333" stroke-width="3.2" stroke-linecap="round"/>
<circle cx="8.2" cy="8.3" r="6.6" fill="url(#gLens)" stroke="#a8a8a8" stroke-width="1.4"/>
<path d="M4.5 8.3 H12" stroke="#4a4a4a" stroke-width="2"/>
</svg>
<!-- external -->
<svg class="a" style="left:389px;top:503px" width="25" height="20" viewBox="0 0 25 20">
<rect x="9.2" y="1.2" width="14.5" height="11.5" fill="none" stroke="#2aa8e8" stroke-width="1.5"/>
<rect x="1" y="7.2" width="15" height="11.8" fill="#f6f6f6" stroke="#2aa8e8" stroke-width="1.5"/>
<path d="M11 14 L18.5 6.5" stroke="#2aa8e8" stroke-width="1.8"/>
<path d="M14 4 H20.5 V10.5 Z" fill="#2aa8e8"/>
</svg>
<!-- tooltip -->
<div class="a" style="left:1027px;top:83px;width:243px;height:21px;background:rgba(0,0,0,0.35);filter:blur(2px)"></div>
<div class="a" style="left:1024px;top:80px;width:243px;height:21px;background:#ffffe1;border:1px solid #000"></div>
<div class="t" style="left:1028px;top:82px;font-size:11.8px;line-height:19px">Set the Main File to be the current source file</div>

</body></html>
